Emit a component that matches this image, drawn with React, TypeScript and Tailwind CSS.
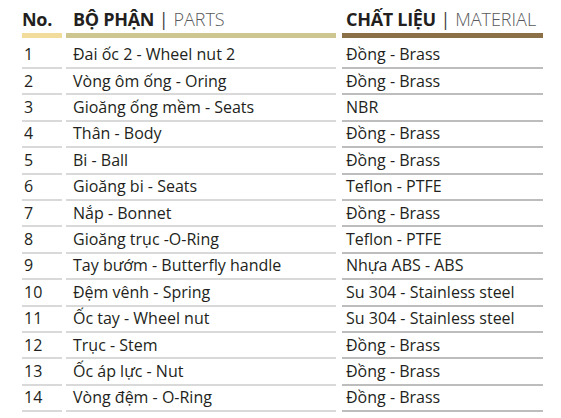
const rows: [string, string][] = [
  ["Đai ốc 2 - Wheel nut 2", "Đồng - Brass"],
  ["Vòng ôm ống - Oring", "Đồng - Brass"],
  ["Gioăng ống mềm - Seats", "NBR"],
  ["Thân - Body", "Đồng - Brass"],
  ["Bi - Ball", "Đồng - Brass"],
  ["Gioăng bi - Seats", "Teflon - PTFE"],
  ["Nắp - Bonnet", "Đồng - Brass"],
  ["Gioăng trục -O-Ring", "Teflon - PTFE"],
  ["Tay bướm - Butterfly handle", "Nhựa ABS - ABS"],
  ["Đệm vênh - Spring", "Su 304 - Stainless steel"],
  ["Ốc tay - Wheel nut", "Su 304 - Stainless steel"],
  ["Trục - Stem", "Đồng - Brass"],
  ["Ốc áp lực - Nut", "Đồng - Brass"],
  ["Vòng đệm - O-Ring", "Đồng - Brass"],
];

export default function App() {
  return (
    <div
      className="w-[561px] h-[418px] bg-white pl-[22px] text-[#231f20]"
      style={{ fontFamily: '"Open Sans", "Liberation Sans", sans-serif' }}
    >
      {/* header */}
      <div className="flex h-[33px] items-end pb-[5px] text-[18px] leading-none">
        <div className="w-[40px] font-bold tracking-[-0.3px]">No.</div>
        <div className="ml-[4px] w-[270px] pl-[7px]">
          <span className="font-bold tracking-[-0.3px]">BỘ PHẬN</span>
          <span className="text-[#414042]"> | </span>
          <span className="text-[#58595b] font-light">PARTS</span>
        </div>
        <div className="ml-[6px] w-[201px] pl-[4px] whitespace-nowrap">
          <span className="font-bold tracking-[-0.3px]">CHẤT LIỆU</span>
          <span className="text-[#414042]"> | </span>
          <span className="text-[#58595b] font-light">MATERIAL</span>
        </div>
      </div>
      <div className="flex h-[5px]">
        <div className="w-[40px] bg-[#f1dc9c]" />
        <div className="ml-[4px] w-[270px] bg-[#cdc690]" />
        <div className="ml-[6px] w-[201px] bg-[#8a6f47]" />
      </div>
      <div className="pt-[4.6px]">
        {rows.map(([part, mat], i) => (
          <div key={i} className="flex h-[26.4px] text-[16px] leading-none">
            <div className="w-[40px] border-b-2 border-[#d9d9d9] pl-[2px] pb-[1px] flex items-center">{i + 1}</div>
            <div className="ml-[4px] w-[270px] border-b-2 border-[#d9d9d9] pl-[7px] pb-[1px] flex items-center">{part}</div>
            <div className="ml-[6px] w-[201px] border-b-2 border-[#bdbdbd] pl-[4px] pb-[1px] flex items-center">{mat}</div>
          </div>
        ))}
      </div>
    </div>
  );
}
